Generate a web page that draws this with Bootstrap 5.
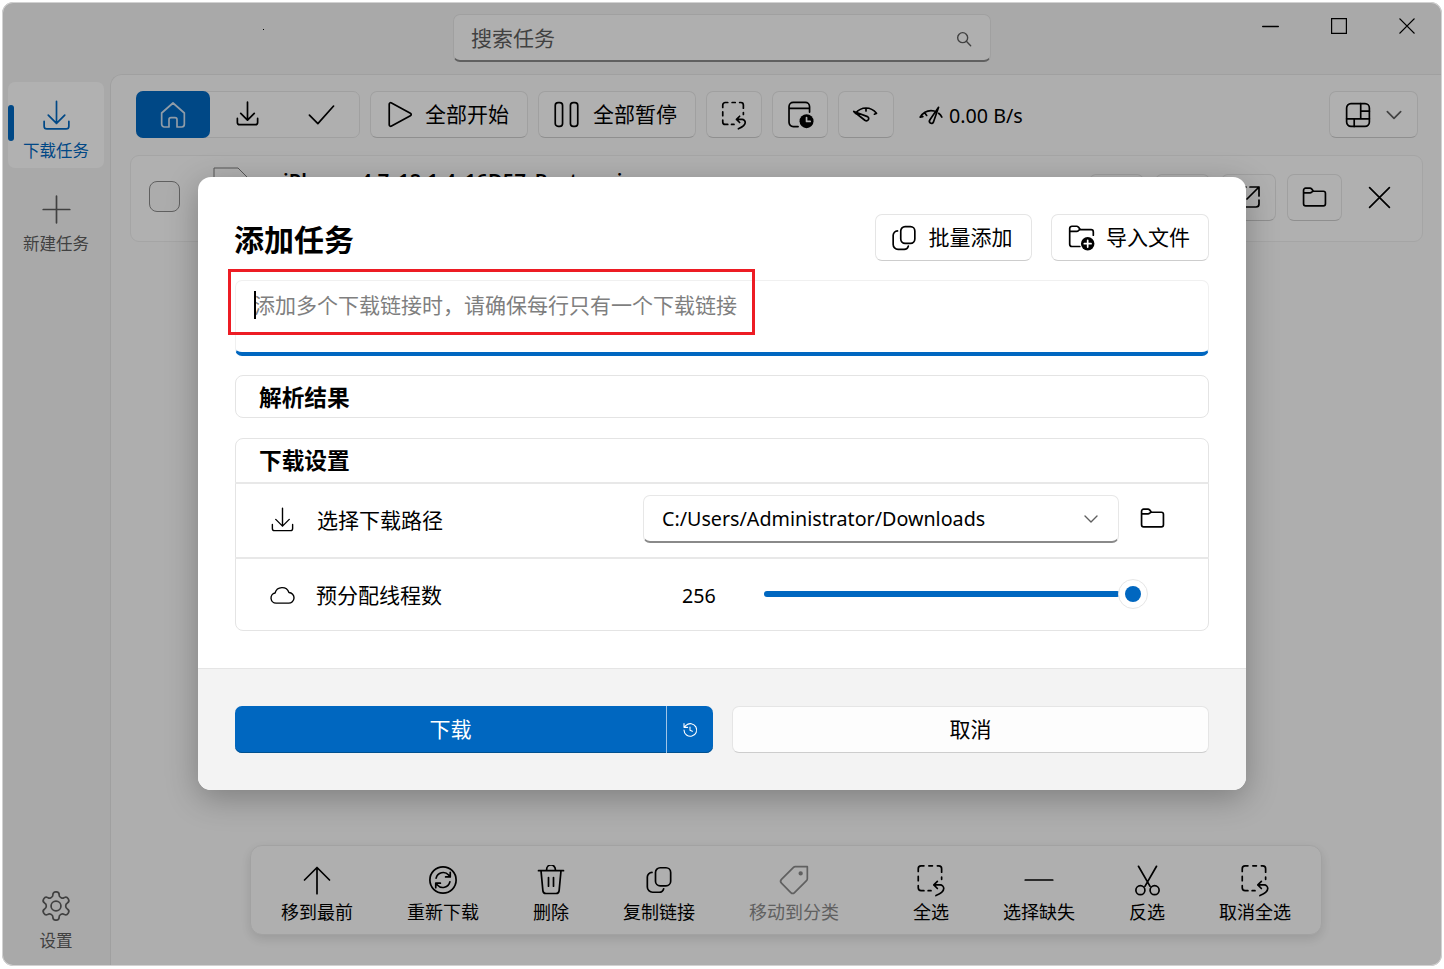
<!DOCTYPE html>
<html lang="zh-CN">
<head>
<meta charset="utf-8">
<title>添加任务</title>
<link href="https://cdn.jsdelivr.net/npm/bootstrap@5.3.0/dist/css/bootstrap.min.css" rel="stylesheet">
<style>
html,body{height:100%;margin:0;background:#fff;overflow:hidden}
body{font-family:"Noto Sans","Noto Sans CJK SC",sans-serif;color:#000;font-size:21px;line-height:1.2}
svg.ic{fill:none;stroke:currentColor;stroke-width:1.7;stroke-linecap:round;stroke-linejoin:round;display:block;flex:none}
symbol *{vector-effect:non-scaling-stroke}
svg.ic.thin{stroke-width:1.4}
svg.ic.hair{stroke-width:1.1}
svg.ic.onblue{color:#cfe0ef}
svg.ic.grey{color:#5f5f5f}
svg.ic.fdl{margin:-4px 0 0 21px}
.defsvg{width:0;height:0}
.bodywrap{min-height:0}
.appwin{position:relative;width:1440px;height:964px;margin:2px;border-radius:11px;overflow:hidden;background:#f3f3f3}
.tbar{height:72px;flex:none}
.tleft{width:451px;flex:none}
.tdot{width:1px;height:1px;background:#000;margin:27px 0 0 261px}
.searchbox{width:538px;height:48px;margin-top:12px;background:#fbfbfb;border:1px solid #e5e5e5;border-bottom:2px solid #8a8a8a;border-radius:7px;padding:2px 18px 0 17px;color:#5e5e5e;font-size:21px}
.wctl{width:68.4px;height:48px;color:#000}
.wctl.mid{padding-left:2px}
.wctls{margin-left:auto;padding-right:1px}
.side{width:108px;flex:none;padding:8px 0 8px 6px}
.sitem{position:relative;width:96px;height:86px;border-radius:7px;padding-top:19px;color:#5d5d5d;font-size:16.5px;text-decoration:none;line-height:20px}
.sitem .sbox{height:30px;margin-bottom:10px;display:flex;align-items:center;justify-content:center}
.sitem.on{background:#fefefe;color:#0067c0}
.sitem.on::before{content:"";position:absolute;left:0;top:23px;width:6px;height:36px;border-radius:3px;background:#0067c0}
.sitem+.sitem{margin-top:7px}
.mainp{flex:1;min-width:0;background:#fafafa;border-top:1px solid #e6e6e6;border-left:1px solid #e6e6e6;border-top-left-radius:12px;padding:16px 24px 31px 25px}
.tools{height:47px;gap:10px}
.btn.fbtn{--bs-btn-padding-x:0;--bs-btn-padding-y:0;--bs-btn-font-size:21px;--bs-btn-line-height:1.2;--bs-btn-color:#000;--bs-btn-bg:#fdfdfd;--bs-btn-border-color:#e5e5e5;--bs-btn-hover-bg:#fdfdfd;--bs-btn-hover-color:#000;--bs-btn-hover-border-color:#e5e5e5;--bs-btn-border-radius:7px;height:47px;display:flex;align-items:center;justify-content:center;border-bottom-color:#cdcdcd;font-family:inherit}
.segwrap{width:224px;height:47px;background:#fbfbfb;border:1px solid #e5e5e5;border-radius:7px;flex:none}
.segon{width:75px;height:47px;margin:-1px 0 -1px -1px;background:#0067c0;color:#fff;border-radius:7px}
.segcell{width:75px}
.btn.fbtn.w158{width:158px;padding-right:4px}
.gap11{gap:11px}
.gap13{gap:13px}
.btn.fbtn.w56{width:56px}
.btn.fbtn.w89{width:89px;gap:13px;padding-left:2px}
.speed{margin-left:14px;font-size:19.7px;gap:5px;padding-top:2px}
.filerow{height:87px;margin:17px -5px 0 -6px;background:#fcfcfc;border:1px solid #ececec;border-radius:9px;padding-left:18px;overflow:hidden}
.chk{width:31px;height:31px;border:1.5px solid #8a8a8a;border-radius:8px;background:#f6f6f6;flex:none;margin-top:-4px}
.ficon{align-self:flex-start;margin:11px 0 0 33px;flex:none}
.fname{font-size:20px;font-weight:600;align-self:flex-start;margin:12px 0 0 34px;white-space:nowrap;line-height:26px;letter-spacing:.2px}
.btn.fbtn.frbtn{width:55px;margin-left:11px;flex:none;margin-top:-3px}
.frx{width:74px;margin-right:6px;margin-top:-3px}
.actbar{width:1072px;height:90px;margin-left:114px;background:#fbfbfb;border:1px solid #e9e9e9;border-radius:12px;box-shadow:0 4px 12px rgba(0,0,0,.12);padding:0 3px;flex:none}
.actitem{padding:18px 27px 0;height:100%;font-size:18px;line-height:22px;white-space:nowrap}
.actitem .abox{height:32px;margin-bottom:5px;display:flex;align-items:center;justify-content:center}
.actitem.off{color:#8a8a8a}
.actsep{width:1px;height:46px;background:#c6c6c6;margin:0 10px}
.dim{position:absolute;inset:0;background:rgba(0,0,0,.3);box-shadow:inset 0 0 0 1px #d2d2d2;border-radius:11px}
.dlg{position:absolute;left:196px;top:175px;width:1048px;height:613px;background:#fff;border-radius:13px;overflow:hidden;box-shadow:0 8px 32px rgba(0,0,0,.28)}
.dlgbody{padding:37px 37px 0;height:491px;flex:none}
.dlghead{height:47px;margin-bottom:19px}
.dlgtitle{font-size:30px;font-weight:700;line-height:1;margin:11px 0 0 -1px}
.btn.fbtn.hb1{width:157px;--bs-btn-bg:#fff;gap:12px;padding-right:4px}
.btn.fbtn.hb2{width:158px;margin-left:19px;--bs-btn-bg:#fff;gap:11px;padding-right:2px}
.urlbox.form-control{height:76px;border:1px solid #f0f0f0;border-bottom:4px solid #0067c0;border-radius:7px;padding:10px 18px;font-size:21px;line-height:28px;color:#7f7f7f;background:#fff;position:relative;font-family:inherit}
.caret{position:absolute;left:18px;top:10px;width:2px;height:28px;background:#000}
.redbox{position:absolute;left:30px;top:92px;width:527px;height:66px;border:3px solid #ed1c24}
.card.cbox{--bs-card-border-color:#e4e4e4;--bs-card-border-radius:8px;--bs-card-inner-border-radius:7px;border-width:1.5px;background:#fff}
.cres{height:43px;margin-top:19px;padding:8px 23px;font-size:22.7px;font-weight:700;line-height:28px}
.cset{height:193px;margin-top:20px}
.csh{height:45px;flex:none;padding:8px 23px 0 24px;font-size:22.7px;font-weight:700;line-height:28px;margin:0 -1px;border-bottom:2px solid #e8e8e8}
.csrow{height:75px;flex:none;padding-left:34px;margin:0 -1px}
.csrow.r2{height:71px}
.csrow.bb{border-bottom:2px solid #e8e8e8}
.cslbl{margin-left:21px;width:327px;font-size:21px}
.r2 .cslbl{width:328px}
.r2 .cslbl,.r2 .tnum{padding-top:2px}
.pathsel{width:476px;height:48px;margin:-4px 0 0 -1px;border:1px solid #e7e7e7;border-bottom:2px solid #8a8a8a;border-radius:7px;padding:2px 18px 0;font-size:19.7px}
.tnum{width:120px;padding-left:38px;font-size:19.7px}
.track{width:356px;height:6px;border-radius:3px;background:#0067c0;flex:none;margin-top:-2px}
.thumb{width:30px;height:30px;border-radius:50%;background:#fff;border:1px solid #e6e6e6;margin:-2px 0 0 -2px;flex:none}
.thumb i{display:block;width:16px;height:16px;border-radius:50%;background:#0067c0}
.dlgfoot{height:122px;background:#f3f3f3;border-top:1px solid #e5e5e5;padding:37px 37px 0}
.split{width:478px;height:47px;background:#0067c0;color:#fff;border-radius:7px;box-shadow:inset 0 -1px 0 #00508f}
.split .mainb{flex:1;border-right:1px solid #9fc4e6;height:100%}
.split .sideb{width:46px;height:100%}
.btn.fbtn.cancelb{width:477px;margin-left:19px}
</style>
</head>
<body>
<svg class="defsvg position-absolute">
<defs>
<symbol id="i-dl" viewBox="0 0 24 24"><path d="M12 1v16M6 11l6 6 6-6M3 15.500V19a2 2 0 0 0 2 2h14a2 2 0 0 0 2-2v-3.500"/></symbol>
<symbol id="i-home" viewBox="0 0 24 24"><path d="M3.500 10.500 12 3l8.500 7.500V19a2 2 0 0 1-2 2H15v-5.500a1.500 1.500 0 0 0-1.500-1.500h-3A1.500 1.500 0 0 0 9 15.500V21H5.500a2 2 0 0 1-2-2z"/></symbol>
<symbol id="i-check" viewBox="0 0 24 24"><path d="M2 12.500l7 7L22 5"/></symbol>
<symbol id="i-play" viewBox="0 0 24 24"><path d="M3.500 3.500v17c0 1 1 1.600 1.900 1.100L21 13c.9-.5.900-1.600 0-2.100L5.400 2.400c-.9-.5-1.900.1-1.900 1.100z"/></symbol>
<symbol id="i-pause" viewBox="0 0 24 24"><rect x="2" y="1.500" width="6.500" height="21" rx="2.500"/><rect x="15.500" y="1.500" width="6.500" height="21" rx="2.500"/></symbol>
<symbol id="i-sel" viewBox="0 0 24 24"><path d="M7 2H5a2 2 0 0 0-2 2v2M10.500 2h2.500M16.500 2h1a2 2 0 0 1 2 2v2.500M3 9.500v3M3 16v1.500a2 2 0 0 0 2 2h2M10 19.500h2M19.500 10v1.500M15.500 23c3-1.300 5.500-2.800 5.500-5a2.500 2.500 0 0 0-2.500-2.500H14M16.500 13 14 15.500l2.500 2.500"/></symbol>
<symbol id="i-cal" viewBox="0 0 24 24"><path d="M10 22H6a3.500 3.500 0 0 1-3.500-3.500v-13A3.500 3.500 0 0 1 6 2h10a3.500 3.500 0 0 1 3.500 3.500V10M2.500 7h17"/><circle cx="17" cy="17.500" r="5.800" fill="currentColor" stroke="none"/><path d="M17 14.500v3.200h3" stroke="#fff"/></symbol>
<symbol id="i-gauge" viewBox="0 0 24 24"><path d="M3 10.500C5.500 7.500 8.500 6 12 6s6.500 1.500 9 4.500M12 6v2.500M3 10.500l2 .5M21 10.500l-1.800.8"/><path d="M1.500 9l9.500 7.500c1 .7 2.300.5 3-.4.600-1 .3-2.100-.7-2.700z"/></symbol>
<symbol id="i-speed" viewBox="0 0 24 24"><path d="M2 13C4.500 9 8 7 12 7c1 0 2 .1 3 .4M19 9.500c1.300 1 2.300 2.200 3 3.500M6.500 9.500 8 11.500M2 13l2.500-.5"/><path d="M19 4 11 15.500c-.7 1-.5 2.300.4 3 1 .6 2.200.3 2.800-.7z"/></symbol>
<symbol id="i-grid" viewBox="0 0 24 24"><rect x="1.500" y="1.500" width="21" height="21" rx="4"/><path d="M14.500 1.500v14M14.500 8.500h8M1.500 15.500h21M8.500 15.500v7"/></symbol>
<symbol id="i-folder" viewBox="0 0 24 24"><path d="M1.500 6V5a2 2 0 0 1 2-2h4.200c.6 0 1.100.3 1.500.7L11 6h9.500a2 2 0 0 1 2 2v10a2 2 0 0 1-2 2h-17a2 2 0 0 1-2-2zM1.500 7.500h6.200c.6 0 1.200-.3 1.600-.7L10.500 6"/></symbol>
<symbol id="i-fadd" viewBox="0 0 24 24"><path d="M1.500 5V4a2 2 0 0 1 2-2h4.200c.6 0 1.100.3 1.500.7L11 5h9.500a2 2 0 0 1 2 2v3M1.500 5v13a2 2 0 0 0 2 2h7M1.500 6.500h6.200c.6 0 1.200-.3 1.600-.7L10.500 5"/><circle cx="17.500" cy="17.500" r="6" fill="currentColor" stroke="none"/><path d="M17.500 14.500v6M14.500 17.500h6" stroke="#fff"/></symbol>
<symbol id="i-copy" viewBox="0 0 24 24"><rect x="9" y="1.500" width="13" height="15.500" rx="4"/><path d="M6 5.500A4 4 0 0 0 2 9.500V18a4.500 4.500 0 0 0 4.500 4.500H12a4 4 0 0 0 4-3"/></symbol>
<symbol id="i-x" viewBox="0 0 24 24"><path d="M2.500 2.500l19 19M21.500 2.500l-19 19"/></symbol>
<symbol id="i-plus" viewBox="0 0 24 24"><path d="M12 1v22M1 12h22"/></symbol>
<symbol id="i-up" viewBox="0 0 24 24"><path d="M12 23V2M2 12 12 2l10 10"/></symbol>
<symbol id="i-sync" viewBox="0 0 24 24"><circle cx="12" cy="12" r="10.500"/><path d="M6.500 10.500a5.800 5.800 0 0 1 10-2.500l1 1.200M17.800 5.800v3.700h-3.700M17.500 13.500a5.800 5.800 0 0 1-10 2.500l-1-1.200M6.200 18.200v-3.700h3.700"/></symbol>
<symbol id="i-trash" viewBox="0 0 24 24"><path d="M2 4.500h20M8.500 4.500V3.500a3.500 3.500 0 0 1 7 0v1M4 4.500l1.500 16a2.500 2.500 0 0 0 2.500 2.300h8a2.500 2.500 0 0 0 2.500-2.300l1.500-16M10 10v7M14 10v7"/></symbol>
<symbol id="i-tag" viewBox="0 0 24 24"><path d="M22 2h-9a2 2 0 0 0-1.400.6L2.600 11.600a2 2 0 0 0 0 2.800l7 7a2 2 0 0 0 2.800 0l9-9a2 2 0 0 0 .6-1.400z"/><circle cx="17" cy="7" r="1" fill="currentColor"/></symbol>
<symbol id="i-minus" viewBox="0 0 24 24"><path d="M1 12h22"/></symbol>
<symbol id="i-cut" viewBox="0 0 24 24"><path d="M5 1l9 15.500M19 1l-9 15.500"/><circle cx="6.500" cy="19.500" r="3.500"/><circle cx="17.500" cy="19.500" r="3.500"/></symbol>
<symbol id="i-gear" viewBox="0 0 24 24"><path d="M12.220 2h-.44a2 2 0 0 0-2 2v.18a2 2 0 0 1-1 1.730l-.43.250a2 2 0 0 1-2 0l-.15-.080a2 2 0 0 0-2.730.730l-.22.380a2 2 0 0 0 .730 2.730l.15.100a2 2 0 0 1 1 1.720v.510a2 2 0 0 1-1 1.740l-.15.090a2 2 0 0 0-.730 2.730l.22.380a2 2 0 0 0 2.730.730l.15-.080a2 2 0 0 1 2 0l.43.250a2 2 0 0 1 1 1.730V20a2 2 0 0 0 2 2h.44a2 2 0 0 0 2-2v-.18a2 2 0 0 1 1-1.730l.43-.25a2 2 0 0 1 2 0l.15.080a2 2 0 0 0 2.730-.730l.22-.390a2 2 0 0 0-.730-2.730l-.15-.080a2 2 0 0 1-1-1.740v-.5a2 2 0 0 1 1-1.740l.15-.090a2 2 0 0 0 .730-2.730l-.22-.380a2 2 0 0 0-2.730-.730l-.15.080a2 2 0 0 1-2 0l-.43-.25a2 2 0 0 1-1-1.730V4a2 2 0 0 0-2-2z"/><circle cx="12" cy="12" r="3.500"/></symbol>
<symbol id="i-search" viewBox="0 0 24 24"><circle cx="10" cy="10" r="7.500"/><path d="M15.500 15.500 22 22"/></symbol>
<symbol id="i-cloud" viewBox="0 0 24 24"><path d="M6.500 19.500a4.700 4.700 0 0 1-.9-9.300A6.700 6.700 0 0 1 18.400 9.700a4.900 4.900 0 0 1-.4 9.800z"/></symbol>
<symbol id="i-chev" viewBox="0 0 24 24"><path d="M4 8l8 8 8-8"/></symbol>
<symbol id="i-hist" viewBox="0 0 24 24"><path d="M3 12a9.500 9.500 0 1 0 3-7L3 8M3 2.500V8h5.500M12 7.500V12.500l3.500 1.500"/></symbol>
<symbol id="i-open" viewBox="0 0 24 24"><path d="M13 2h9v9M22 2 10 14M22 15v4a3 3 0 0 1-3 3H5a3 3 0 0 1-3-3V5a3 3 0 0 1 3-3h4"/></symbol>
</defs>
</svg>

<div class="appwin d-flex flex-column">
  <header class="tbar d-flex align-items-start">
    <div class="tleft"><div class="tdot"></div></div>
    <div class="searchbox d-flex align-items-center justify-content-between">
      <span>搜索任务</span>
      <svg class="ic thin" width="16" height="16"><use href="#i-search"/></svg>
    </div>
    <div class="wctls d-flex">
      <div class="wctl d-flex align-items-center justify-content-center"><svg class="ic thin" width="17" height="17"><use href="#i-minus"/></svg></div>
      <div class="wctl mid d-flex align-items-center justify-content-center"><svg width="16" height="16" class="ic thin"><rect x=".5" y=".5" width="15" height="15"/></svg></div>
      <div class="wctl d-flex align-items-center justify-content-center"><svg class="ic thin" width="18" height="18"><use href="#i-x"/></svg></div>
    </div>
  </header>

  <div class="bodywrap d-flex flex-grow-1">
    <nav class="side d-flex flex-column">
      <a class="sitem on d-flex flex-column align-items-center" href="#"><span class="sbox"><svg class="ic" width="33" height="33"><use href="#i-dl"/></svg></span>下载任务</a>
      <a class="sitem d-flex flex-column align-items-center" href="#"><span class="sbox"><svg class="ic" width="29" height="29"><use href="#i-plus"/></svg></span>新建任务</a>
      <a class="sitem d-flex flex-column align-items-center mt-auto" href="#"><span class="sbox"><svg class="ic" width="34" height="34"><use href="#i-gear"/></svg></span>设置</a>
    </nav>

    <main class="mainp d-flex flex-column">
      <div class="tools d-flex align-items-center">
        <div class="segwrap d-flex align-items-center">
          <div class="segon d-flex align-items-center justify-content-center"><svg class="ic onblue" width="32" height="32"><use href="#i-home"/></svg></div>
          <div class="segcell d-flex justify-content-center"><svg class="ic" width="27" height="27"><use href="#i-dl"/></svg></div>
          <div class="segcell d-flex justify-content-center"><svg class="ic" width="29" height="29"><use href="#i-check"/></svg></div>
        </div>
        <button class="btn fbtn w158 gap11"><svg class="ic" width="29" height="29"><use href="#i-play"/></svg>全部开始</button>
        <button class="btn fbtn w158 gap13"><svg class="ic" width="27" height="27"><use href="#i-pause"/></svg>全部暂停</button>
        <button class="btn fbtn w56"><svg class="ic" width="30" height="30"><use href="#i-sel"/></svg></button>
        <button class="btn fbtn w56"><svg class="ic" width="29" height="29"><use href="#i-cal"/></svg></button>
        <button class="btn fbtn w56"><svg class="ic" width="28" height="28"><use href="#i-gauge"/></svg></button>
        <div class="speed d-flex align-items-center"><svg class="ic" width="26" height="26"><use href="#i-speed"/></svg>0.00 B/s</div>
        <button class="btn fbtn w89 ms-auto"><svg class="ic" width="26" height="26"><use href="#i-grid"/></svg><svg class="ic grey" width="20" height="20"><use href="#i-chev"/></svg></button>
      </div>

      <div class="filerow d-flex align-items-center">
        <div class="chk"></div>
        <svg class="ficon" width="36" height="44" fill="none" stroke="#7d7d7d" stroke-width="1"><path d="M1 44V1h24l10 10v33"/></svg>
        <div class="fname flex-grow-1">iPhone_4.7_12.1.4_16D57_Restore.ipsw</div>
        <button class="btn fbtn frbtn"></button>
        <button class="btn fbtn frbtn"></button>
        <button class="btn fbtn frbtn"><svg class="ic" width="24" height="24"><use href="#i-open"/></svg></button>
        <button class="btn fbtn frbtn"><svg class="ic" width="25" height="25"><use href="#i-folder"/></svg></button>
        <div class="frx d-flex justify-content-center"><svg class="ic" width="25" height="25"><use href="#i-x"/></svg></div>
      </div>

      <div class="actbar d-flex align-items-stretch mt-auto">
        <div class="actitem d-flex flex-column align-items-center"><span class="abox"><svg class="ic" width="30" height="30"><use href="#i-up"/></svg></span>移到最前</div>
        <div class="actitem d-flex flex-column align-items-center"><span class="abox"><svg class="ic" width="30" height="30"><use href="#i-sync"/></svg></span>重新下载</div>
        <div class="actitem d-flex flex-column align-items-center"><span class="abox"><svg class="ic" width="30" height="30"><use href="#i-trash"/></svg></span>删除</div>
        <div class="actitem d-flex flex-column align-items-center"><span class="abox"><svg class="ic" width="28" height="28"><use href="#i-copy"/></svg></span>复制链接</div>
        <div class="actitem off d-flex flex-column align-items-center"><span class="abox"><svg class="ic" width="32" height="32"><use href="#i-tag"/></svg></span>移动到分类</div>
        <div class="actsep align-self-center"></div>
        <div class="actitem d-flex flex-column align-items-center"><span class="abox"><svg class="ic" width="34" height="34"><use href="#i-sel"/></svg></span>全选</div>
        <div class="actitem d-flex flex-column align-items-center"><span class="abox"><svg class="ic" width="30" height="30"><use href="#i-minus"/></svg></span>选择缺失</div>
        <div class="actitem d-flex flex-column align-items-center"><span class="abox"><svg class="ic" width="31" height="31"><use href="#i-cut"/></svg></span>反选</div>
        <div class="actitem d-flex flex-column align-items-center"><span class="abox"><svg class="ic" width="34" height="34"><use href="#i-sel"/></svg></span>取消全选</div>
      </div>
    </main>
  </div>

  <div class="dim"></div>

  <section class="dlg d-flex flex-column" role="dialog">
    <div class="dlgbody d-flex flex-column">
      <div class="dlghead d-flex justify-content-between">
        <h1 class="dlgtitle">添加任务</h1>
        <div class="d-flex">
          <button class="btn fbtn hb1"><svg class="ic" width="26" height="26"><use href="#i-copy"/></svg>批量添加</button>
          <button class="btn fbtn hb2"><svg class="ic" width="27" height="27"><use href="#i-fadd"/></svg>导入文件</button>
        </div>
      </div>
      <div class="urlbox form-control"><span class="caret"></span>添加多个下载链接时，请确保每行只有一个下载链接</div>
      <div class="card cbox cres">解析结果</div>
      <div class="card cbox cset">
        <div class="csh">下载设置</div>
        <div class="csrow bb d-flex align-items-center">
          <svg class="ic thin" width="27" height="27"><use href="#i-dl"/></svg>
          <div class="cslbl">选择下载路径</div>
          <div class="pathsel d-flex align-items-center justify-content-between">
            <span>C:/Users/Administrator/Downloads</span>
            <svg class="ic thin grey" width="18" height="18"><use href="#i-chev"/></svg>
          </div>
          <svg class="ic fdl" width="25" height="25"><use href="#i-folder"/></svg>
        </div>
        <div class="csrow r2 d-flex align-items-center">
          <svg class="ic thin" width="26" height="26"><use href="#i-cloud"/></svg>
          <div class="cslbl">预分配线程数</div>
          <div class="tnum">256</div>
          <div class="track"></div>
          <div class="thumb d-flex align-items-center justify-content-center"><i></i></div>
        </div>
      </div>
    </div>
    <div class="dlgfoot d-flex">
      <div class="split d-flex">
        <div class="mainb d-flex align-items-center justify-content-center">下载</div>
        <div class="sideb d-flex align-items-center justify-content-center"><svg class="ic hair" width="16" height="16"><use href="#i-hist"/></svg></div>
      </div>
      <button class="btn fbtn cancelb">取消</button>
    </div>
    <div class="redbox"></div>
  </section>
</div>
</body>
</html>
